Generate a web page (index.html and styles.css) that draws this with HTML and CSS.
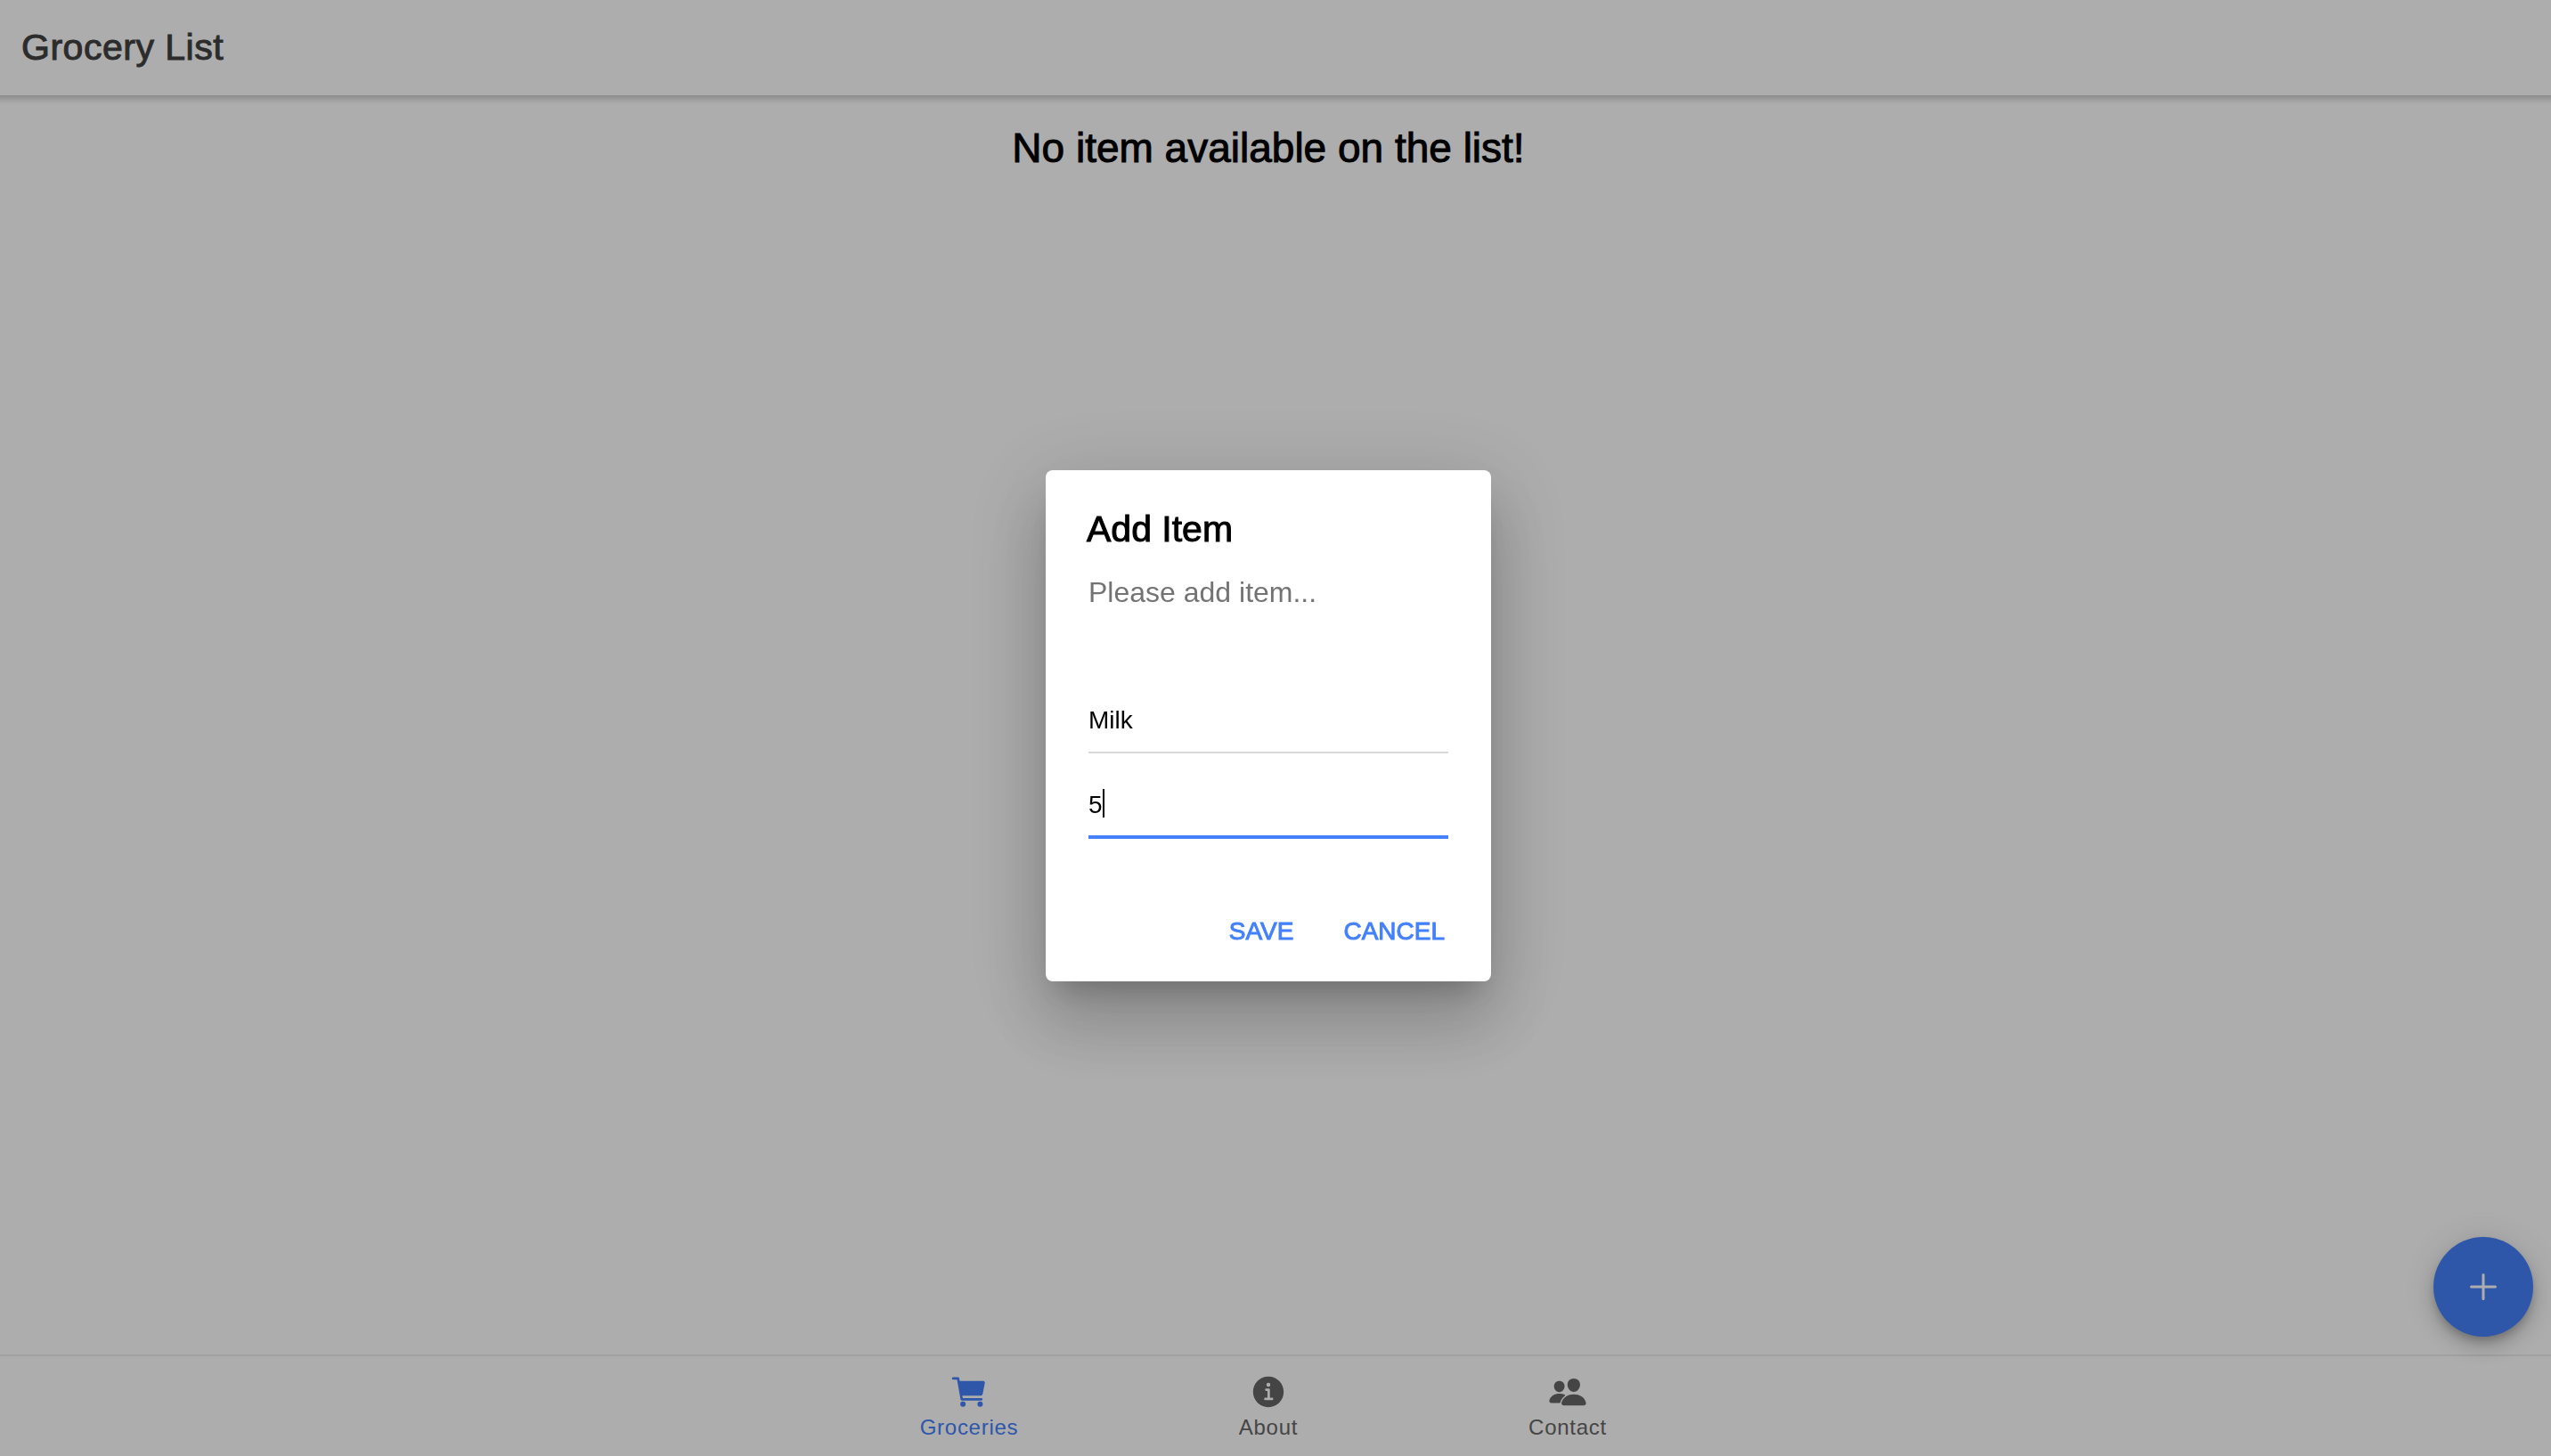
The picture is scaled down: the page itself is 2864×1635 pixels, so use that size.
FILE: index.html
```html
<!DOCTYPE html>
<html lang="en">
<head>
<meta charset="utf-8">
<title>Grocery List</title>
<meta name="viewport" content="width=device-width, initial-scale=1">
<link rel="stylesheet" href="styles.css">
</head>
<body>
<div class="app">
  <header class="header">
    <h1 class="header-title medium">Grocery List</h1>
  </header>
  <main class="content">
    <h2 class="empty medium">No item available on the list!</h2>
    <button class="fab" type="button" aria-label="Add item">
      <svg class="fab-icon" viewBox="0 0 512 512" aria-hidden="true"><path d="M256 112v288M400 256H112" fill="none" stroke="currentColor" stroke-width="32" stroke-linecap="round"/></svg>
    </button>
  </main>
  <nav class="tabs">
    <a class="tab tab-selected" href="#groceries">
      <svg class="tab-icon" viewBox="0 0 512 512" aria-hidden="true"><circle cx="176" cy="416" r="35"/><circle cx="400" cy="416" r="35"/><path d="M456.8 120.78a23.92 23.92 0 00-18.56-8.78H133.89l-6.13-34.78A16 16 0 00112 64H48a16 16 0 000 32h50.58l45.66 258.78A16 16 0 00160 368h256a16 16 0 000-32H173.42l-5.64-32h241.66A24.07 24.07 0 00433 284.71l28.8-144a24 24 0 00-5-19.93z"/></svg>
      <span>Groceries</span>
    </a>
    <a class="tab" href="#about">
      <svg class="tab-icon" viewBox="0 0 512 512" aria-hidden="true"><path d="M256 56C145.72 56 56 145.72 56 256s89.72 200 200 200 200-89.72 200-200S366.28 56 256 56zm0 82a26 26 0 11-26 26 26 26 0 0126-26zm48 226h-88a16 16 0 010-32h28v-88h-16a16 16 0 010-32h32a16 16 0 0116 16v104h28a16 16 0 010 32z"/></svg>
      <span>About</span>
    </a>
    <a class="tab" href="#contact">
      <svg class="tab-icon" viewBox="0 0 512 512" aria-hidden="true"><path d="M336 256c-20.56 0-40.44-9.18-56-25.84-15.13-16.25-24.37-37.92-26-61-1.74-24.62 5.77-47.26 21.14-63.76S312 80 336 80c23.83 0 45.38 9.06 60.7 25.52 15.47 16.62 23 39.22 21.26 63.63-1.67 23.11-10.9 44.77-26 61C376.44 246.82 356.57 256 336 256zM467.83 432H204.18a27.71 27.71 0 01-22-10.67 30.22 30.22 0 01-5.26-25.79c8.42-33.81 29.28-61.85 60.32-81.08C264.79 297.4 299.86 288 336 288c36.85 0 71 9 98.71 26.05 31.11 19.13 52 47.33 60.38 81.55a30.27 30.27 0 01-5.32 25.78A27.68 27.68 0 01467.83 432zM147 260c-35.19 0-66.13-32.72-69-72.93-1.42-20.6 5-39.65 18-53.62 12.86-13.83 31-21.45 51-21.45s38 7.66 50.93 21.57c13.1 14.08 19.5 33.09 18 53.52-2.87 40.2-33.8 72.91-68.93 72.91zM212.66 291.45c-17.59-8.6-40.42-12.9-65.65-12.9-29.46 0-58.07 7.68-80.57 21.62-25.51 15.83-42.67 38.88-49.6 66.71a27.39 27.39 0 004.79 23.36A25.32 25.32 0 0041.72 400h111a8 8 0 007.87-6.57c.11-.63.25-1.26.41-1.88 8.48-34.06 28.35-62.84 57.71-83.82a8 8 0 00-.63-13.39c-1.57-.92-3.37-1.89-5.42-2.89z"/></svg>
      <span>Contact</span>
    </a>
  </nav>
</div>

<div class="backdrop">
  <form class="alert" role="alertdialog" aria-modal="true" aria-labelledby="alert-title" aria-describedby="alert-message">
    <h2 class="alert-title medium" id="alert-title">Add Item</h2>
    <p class="alert-message" id="alert-message">Please add item...</p>
    <div class="fields">
      <input class="field" type="text" name="name" value="Milk" aria-label="Name">
      <div class="field-wrap">
        <input class="field field-active" type="text" inputmode="numeric" name="quantity" value="5" aria-label="Quantity">
        <span class="caret"></span>
      </div>
    </div>
    <div class="actions">
      <button class="action" type="button">SAVE</button>
      <button class="action" type="button">CANCEL</button>
    </div>
  </form>
</div>
</body>
</html>
```
FILE: styles.css
```css
:root {
  --primary: #4481fb;
  --muted: #666;
}

* {
  box-sizing: border-box;
}

body {
  margin: 0;
  background: #fff;
  color: #000;
  font-family: "Helvetica Neue", "Liberation Sans", Arial, sans-serif;
}

/* Medium weight, for a family that ships only regular and bold */
.medium,
.action {
  font-weight: 400;
  -webkit-text-stroke: 1px currentColor;
}

.app {
  display: flex;
  flex-direction: column;
  min-height: 100vh;
}

.header {
  position: relative;
  display: flex;
  align-items: center;
  height: 107px;
  padding: 0 24px;
}

.header::after {
  content: "";
  position: absolute;
  top: 100%;
  left: 0;
  right: 0;
  height: 10px;
  background: linear-gradient(rgba(0, 0, 0, 0.2), rgba(0, 0, 0, 0.08) 50%, rgba(0, 0, 0, 0));
}

.header-title {
  margin: 0;
  color: #424242;
  font-size: 41px;
  letter-spacing: 0.0125em;
}

.content {
  position: relative;
  flex: 1;
  padding: 33px 16px 0 0;
}

.empty {
  margin: 0;
  font-size: 46px;
  line-height: 52px;
  text-align: center;
}

.fab {
  position: absolute;
  right: 20px;
  bottom: 20px;
  display: grid;
  place-items: center;
  width: 112px;
  height: 112px;
  padding: 0;
  border: 0;
  border-radius: 50%;
  background: var(--primary);
  color: #fff;
  box-shadow: 0 6px 10px -2px rgba(0, 0, 0, 0.2), 0 12px 20px rgba(0, 0, 0, 0.14), 0 2px 36px rgba(0, 0, 0, 0.12);
}

.fab-icon {
  width: 48px;
  height: 48px;
}

.tabs {
  display: flex;
  justify-content: center;
  height: 114px;
  padding-right: 16px;
  border-top: 2px solid rgba(0, 0, 0, 0.07);
}

.tab {
  display: flex;
  flex: 0 1 336px;
  flex-direction: column;
  align-items: center;
  padding-top: 18px;
  gap: 4px;
  color: var(--muted);
  font-size: 24px;
  line-height: 28px;
  letter-spacing: 0.03em;
  text-decoration: none;
}

.tab-selected {
  color: var(--primary);
}

.tab-icon {
  width: 44px;
  height: 44px;
  fill: currentColor;
}

.backdrop {
  position: fixed;
  inset: 0;
  display: grid;
  place-items: center;
  padding: 0 16px 5px 0;
  background: rgba(0, 0, 0, 0.32);
}

.alert {
  width: 500px;
  border-radius: 8px;
  background: #fff;
  box-shadow: 0 22px 30px -14px rgba(0, 0, 0, 0.2), 0 48px 76px 6px rgba(0, 0, 0, 0.14), 0 18px 92px 16px rgba(0, 0, 0, 0.12);
}

.alert-title {
  margin: 0;
  padding: 42px 46px 0;
  font-size: 41px;
  line-height: 48px;
}

.alert-message {
  margin: 0;
  padding: 28px 48px 0;
  color: #737373;
  font-size: 32px;
  line-height: 38px;
}

.fields {
  display: grid;
  gap: 10px;
  padding: 76px 48px 0;
}

.field-wrap {
  position: relative;
}

.field {
  display: block;
  width: 100%;
  height: 86px;
  padding: 28px 0 14px;
  border: 0;
  border-bottom: 2px solid #d8d8d8;
  outline: none;
  background: none;
  color: #000;
  font: inherit;
  font-size: 28px;
}

.field-active {
  border-bottom: 4px solid var(--primary);
  caret-color: transparent;
}

.caret {
  position: absolute;
  top: 30px;
  left: 16px;
  width: 2px;
  height: 32px;
  background: #000;
}

.actions {
  display: flex;
  justify-content: flex-end;
  padding: 68px 16px 20px;
}

.action {
  margin: 0 16px 0 0;
  padding: 20px;
  border: 0;
  background: none;
  color: var(--primary);
  font-family: inherit;
  font-size: 28px;
  line-height: 32px;
}
```
